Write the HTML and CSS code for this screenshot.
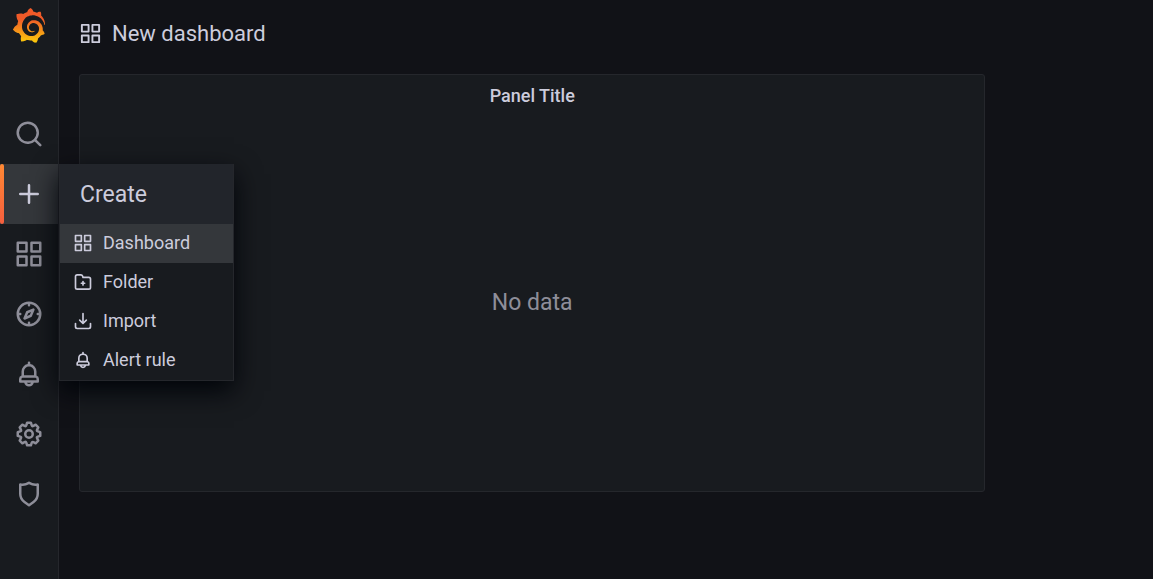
FILE: index.html
```html
<!DOCTYPE html>
<html lang="en">
<head>
<meta charset="utf-8">
<title>New dashboard - Grafana</title>
<link rel="stylesheet" href="styles.css">
</head>
<body>
<svg class="sprite" aria-hidden="true">
  <symbol id="search" viewBox="0 0 24 24"><path d="M21.71,20.29,18,16.61A9,9,0,1,0,16.61,18l3.68,3.68a1,1,0,0,0,1.42,0A1,1,0,0,0,21.71,20.29ZM11,18a7,7,0,1,1,7-7A7,7,0,0,1,11,18Z"/></symbol>
  <symbol id="plus" viewBox="0 0 24 24"><path d="M19,11H13V5a1,1,0,0,0-2,0v6H5a1,1,0,0,0,0,2h6v6a1,1,0,0,0,2,0V13h6a1,1,0,0,0,0-2Z"/></symbol>
  <symbol id="apps" viewBox="0 0 24 24"><path d="M10,13H3a1,1,0,0,0-1,1v7a1,1,0,0,0,1,1h7a1,1,0,0,0,1-1V14A1,1,0,0,0,10,13ZM9,20H4V15H9ZM21,2H14a1,1,0,0,0-1,1v7a1,1,0,0,0,1,1h7a1,1,0,0,0,1-1V3A1,1,0,0,0,21,2ZM20,9H15V4h5Zm1,4H14a1,1,0,0,0-1,1v7a1,1,0,0,0,1,1h7a1,1,0,0,0,1-1V14A1,1,0,0,0,21,13Zm-1,7H15V15h5ZM10,2H3A1,1,0,0,0,2,3v7a1,1,0,0,0,1,1h7a1,1,0,0,0,1-1V3A1,1,0,0,0,10,2ZM9,9H4V4H9Z"/></symbol>
  <symbol id="compass" viewBox="0 0 24 24"><path d="M12,2A10,10,0,1,0,22,12,10,10,0,0,0,12,2Zm1,17.93V19a1,1,0,0,0-2,0v.93A8,8,0,0,1,4.07,13H5a1,1,0,0,0,0-2H4.07A8,8,0,0,1,11,4.07V5a1,1,0,0,0,2,0V4.07A8,8,0,0,1,19.93,11H19a1,1,0,0,0,0,2h.93A8,8,0,0,1,13,19.93ZM15.14,7.55l-5,2.12a1,1,0,0,0-.52.52l-2.12,5a1,1,0,0,0,.21,1.1,1,1,0,0,0,.7.3.93.93,0,0,0,.4-.09l5-2.12a1,1,0,0,0,.52-.52l2.12-5a1,1,0,0,0-1.31-1.31Zm-2.49,5.1-2.28,1,1-2.28,2.28-1Z"/></symbol>
  <symbol id="bell" viewBox="0 0 24 24"><path d="M18,13.18V10a6,6,0,0,0-5-5.91V3a1,1,0,0,0-2,0V4.09A6,6,0,0,0,6,10v3.18A3,3,0,0,0,4,16v2a1,1,0,0,0,1,1H8.14a4,4,0,0,0,7.72,0H19a1,1,0,0,0,1-1V16A3,3,0,0,0,18,13.18ZM8,10a4,4,0,0,1,8,0v3H8Zm4,10a2,2,0,0,1-1.72-1h3.44A2,2,0,0,1,12,20Zm6-3H6V16a1,1,0,0,1,1-1H17a1,1,0,0,1,1,1Z"/></symbol>
  <symbol id="cog" viewBox="0 0 24 24"><path d="M21.32,9.55l-1.89-.63.89-1.78A1,1,0,0,0,20.13,6L18,3.87a1,1,0,0,0-1.15-.19l-1.78.89-.63-1.89A1,1,0,0,0,13.5,2h-3a1,1,0,0,0-.95.68L8.92,4.57,7.14,3.68A1,1,0,0,0,6,3.87L3.87,6a1,1,0,0,0-.19,1.15l.89,1.78-1.89.63A1,1,0,0,0,2,10.5v3a1,1,0,0,0,.68.95l1.89.63-.89,1.78A1,1,0,0,0,3.87,18L6,20.13a1,1,0,0,0,1.15.19l1.78-.89.63,1.89a1,1,0,0,0,.95.68h3a1,1,0,0,0,.95-.68l.63-1.89,1.78.89A1,1,0,0,0,18,20.13L20.13,18a1,1,0,0,0,.19-1.15l-.89-1.78,1.89-.63A1,1,0,0,0,22,13.5v-3A1,1,0,0,0,21.32,9.55ZM20,12.78l-1.2.4A2,2,0,0,0,17.64,16l.57,1.14-1.1,1.1L16,17.64a2,2,0,0,0-2.79,1.16l-.4,1.2H11.22l-.4-1.2A2,2,0,0,0,8,17.64l-1.14.57-1.1-1.1L6.36,16A2,2,0,0,0,5.2,13.18L4,12.78V11.22l1.2-.4A2,2,0,0,0,6.36,8L5.79,6.89l1.1-1.1L8,6.36A2,2,0,0,0,10.82,5.2l.4-1.2h1.56l.4,1.2A2,2,0,0,0,16,6.36l1.14-.57,1.1,1.1L17.64,8a2,2,0,0,0,1.16,2.79l1.2.4ZM12,8a4,4,0,1,0,4,4A4,4,0,0,0,12,8Zm0,6a2,2,0,1,1,2-2A2,2,0,0,1,12,14Z"/></symbol>
  <symbol id="shield" viewBox="0 0 24 24"><path d="M19.63,3.65a1,1,0,0,0-.84-.2,8,8,0,0,1-6.22-1.27,1,1,0,0,0-1.14,0A8,8,0,0,1,5.21,3.45a1,1,0,0,0-.84.2A1,1,0,0,0,4,4.43v7.45a9,9,0,0,0,3.77,7.33l3.65,2.6a1,1,0,0,0,1.16,0l3.65-2.6A9,9,0,0,0,20,11.88V4.43A1,1,0,0,0,19.63,3.65ZM18,11.88a7,7,0,0,1-2.93,5.7L12,19.77,8.93,17.58A7,7,0,0,1,6,11.88V5.58a10,10,0,0,0,6-1.39,10,10,0,0,0,6,1.39Z"/></symbol>
  <symbol id="folder-plus" viewBox="0 0 24 24"><path d="M14,12.5H13v-1a1,1,0,0,0-2,0v1H10a1,1,0,0,0,0,2h1v1a1,1,0,0,0,2,0v-1h1a1,1,0,0,0,0-2Zm5-7H12.72l-.32-1a3,3,0,0,0-2.84-2H5a3,3,0,0,0-3,3v13a3,3,0,0,0,3,3H19a3,3,0,0,0,3-3V8.5A3,3,0,0,0,19,5.5Zm1,13a1,1,0,0,1-1,1H5a1,1,0,0,1-1-1V5.5a1,1,0,0,1,1-1H9.56a1,1,0,0,1,.95.68l.54,1.64A1,1,0,0,0,12,7.5h7a1,1,0,0,1,1,1Z"/></symbol>
  <symbol id="import" viewBox="0 0 24 24"><path d="M21,14a1,1,0,0,0-1,1v4a1,1,0,0,1-1,1H5a1,1,0,0,1-1-1V15a1,1,0,0,0-2,0v4a3,3,0,0,0,3,3H19a3,3,0,0,0,3-3V15A1,1,0,0,0,21,14Zm-9.71,1.71a1,1,0,0,0,.33.21.94.94,0,0,0,.76,0,1,1,0,0,0,.33-.21l4-4a1,1,0,0,0-1.42-1.42L13,12.59V3a1,1,0,0,0-2,0v9.59l-2.29-2.3a1,1,0,1,0-1.42,1.42Z"/></symbol>
</svg>
<div class="app">
  <nav class="sidebar" aria-label="Main">
    <a class="logo" href="#" aria-label="Home">
      <svg class="logo-mark" viewBox="0 0 351 365" aria-hidden="true">
        <defs><linearGradient id="flame" gradientUnits="userSpaceOnUse" x1="175.5" y1="445" x2="175.5" y2="114"><stop offset="0" stop-color="#fff100"/><stop offset="1" stop-color="#f05a28"/></linearGradient></defs>
        <path fill="url(#flame)" d="M342,161.2c-0.6-6.1-1.6-13.1-3.6-20.9c-2-7.7-5-16.2-9.4-25c-4.4-8.8-10.1-17.9-17.5-26.8c-2.9-3.5-6.1-6.9-9.5-10.2c5.1-20.3-6.2-37.9-6.2-37.9c-19.5-1.2-31.9,6.1-36.5,9.4c-0.8-0.3-1.5-0.7-2.3-1c-3.3-1.3-6.7-2.6-10.3-3.7c-3.5-1.1-7.1-2.1-10.8-3c-3.7-0.9-7.4-1.6-11.2-2.2c-0.7-0.1-1.3-0.2-2-0.3c-8.5-27.2-32.9-38.6-32.9-38.6c-27.3,17.3-32.4,41.5-32.4,41.5s-0.1,0.5-0.3,1.4c-1.5,0.4-3,0.9-4.5,1.3c-2.1,0.6-4.2,1.4-6.2,2.2c-2.1,0.8-4.1,1.6-6.2,2.5c-4.1,1.8-8.2,3.8-12.2,6c-3.9,2.2-7.7,4.6-11.4,7.1c-0.5-0.2-1-0.4-1-0.4c-37.8-14.4-71.3,2.9-71.3,2.9c-3.1,40.2,15.1,65.5,18.7,70.1c-0.9,2.5-1.7,5-2.5,7.5c-2.8,9.1-4.9,18.4-6.2,28.1c-0.2,1.4-0.4,2.8-0.5,4.2C18.8,192.7,8.5,228,8.5,228c29.1,33.5,63.1,35.6,63.1,35.6c0,0,0.1-0.1,0.1-0.1c4.3,7.7,9.3,15,14.9,21.9c2.4,2.9,4.8,5.6,7.4,8.3c-10.6,30.4,1.5,55.6,1.5,55.6c32.4,1.2,53.7-14.2,58.2-17.7c3.2,1.1,6.5,2.1,9.8,2.9c10,2.6,20.2,4.1,30.4,4.5c2.5,0.1,5.1,0.2,7.6,0.1l1.2,0l0.8,0l1.6,0l1.6-0.1l0,0.1c15.3,21.8,42.1,24.9,42.1,24.9c19.1-20.1,20.2-40.1,20.2-44.4l0,0c0,0,0-0.1,0-0.3c0-0.4,0-0.6,0-0.6l0,0c0-0.3,0-0.6,0-0.9c4-2.8,7.8-5.8,11.4-9.1c7.6-6.9,14.3-14.8,19.9-23.3c0.5-0.8,1-1.6,1.5-2.4c21.6,1.2,36.9-13.4,36.9-13.4c-3.6-22.5-16.4-33.5-19.1-35.6l0,0c0,0-0.1-0.1-0.3-0.2c-0.2-0.1-0.2-0.2-0.2-0.2c0,0,0,0,0,0c-0.1-0.1-0.3-0.2-0.5-0.3c0.1-1.4,0.2-2.7,0.3-4.1c0.2-2.4,0.2-4.9,0.2-7.3l0-1.8l0-0.9l0-0.5c0-0.6,0-0.4,0-0.6l-0.1-1.5l-0.1-2c0-0.7-0.1-1.3-0.2-1.9c-0.1-0.6-0.1-1.3-0.2-1.9l-0.2-1.9l-0.3-1.9c-0.4-2.5-0.8-4.9-1.4-7.4c-2.3-9.7-6.1-18.9-11-27.2c-5-8.3-11.2-15.6-18.3-21.8c-7-6.2-14.9-11.2-23.1-14.9c-8.3-3.7-16.9-6.1-25.5-7.2c-4.3-0.6-8.6-0.8-12.9-0.7l-1.6,0l-0.4,0c-0.1,0-0.6,0-0.5,0l-0.7,0l-1.6,0.1c-0.6,0-1.2,0.1-1.7,0.1c-2.2,0.2-4.4,0.5-6.5,0.9c-8.6,1.6-16.7,4.7-23.8,9c-7.1,4.3-13.3,9.6-18.3,15.6c-5,6-8.9,12.7-11.6,19.6c-2.7,6.9-4.2,14.1-4.6,21c-0.1,1.7-0.1,3.5-0.1,5.2c0,0.4,0,0.9,0,1.3l0.1,1.4c0.1,0.8,0.1,1.7,0.2,2.5c0.3,3.5,1,6.9,1.9,10.1c1.9,6.5,4.9,12.4,8.6,17.4c3.7,5,8.2,9.1,12.9,12.4c4.7,3.2,9.8,5.5,14.8,7c5,1.5,10,2.1,14.7,2.1c0.6,0,1.2,0,1.7,0c0.3,0,0.6,0,0.9,0c0.3,0,0.6,0,0.9-0.1c0.5,0,1-0.1,1.5-0.1c0.1,0,0.3,0,0.4-0.1l0.5-0.1c0.3,0,0.6-0.1,0.9-0.1c0.6-0.1,1.1-0.2,1.7-0.3c0.6-0.1,1.1-0.2,1.6-0.4c1.1-0.2,2.1-0.6,3.1-0.9c2-0.7,4-1.5,5.7-2.4c1.8-0.9,3.4-2,5-3c0.4-0.3,0.9-0.6,1.3-1c1.6-1.3,1.9-3.7,0.6-5.3c-1.1-1.4-3.1-1.8-4.7-0.9c-0.4,0.2-0.8,0.4-1.2,0.6c-1.4,0.7-2.8,1.3-4.3,1.8c-1.5,0.5-3.1,0.9-4.7,1.2c-0.8,0.1-1.6,0.2-2.5,0.3c-0.4,0-0.8,0.1-1.3,0.1c-0.4,0-0.9,0-1.2,0c-0.4,0-0.8,0-1.2,0c-0.5,0-1,0-1.5-0.1c0,0-0.3,0-0.1,0l-0.2,0l-0.3,0c-0.2,0-0.5,0-0.7-0.1c-0.5-0.1-0.9-0.1-1.4-0.2c-3.7-0.5-7.4-1.6-10.9-3.2c-3.6-1.6-7-3.8-10.1-6.6c-3.1-2.8-5.8-6.1-7.9-9.9c-2.1-3.8-3.6-8-4.3-12.4c-0.3-2.2-0.5-4.5-0.4-6.7c0-0.6,0.1-1.2,0.1-1.8c0,0.2,0-0.1,0-0.1l0-0.2l0-0.5c0-0.3,0.1-0.6,0.1-0.9c0.1-1.2,0.3-2.4,0.5-3.6c1.7-9.6,6.5-19,13.9-26.1c1.9-1.8,3.9-3.4,6-4.9c2.1-1.5,4.4-2.8,6.8-3.9c2.4-1.1,4.8-2,7.4-2.7c2.5-0.7,5.1-1.1,7.8-1.4c1.3-0.1,2.6-0.2,4-0.2c0.4,0,0.6,0,0.9,0l1.1,0l0.7,0c0.3,0,0,0,0.1,0l0.3,0l1.1,0.1c2.9,0.2,5.7,0.6,8.5,1.3c5.6,1.2,11.1,3.3,16.2,6.1c10.2,5.7,18.9,14.5,24.2,25.1c2.7,5.3,4.6,11,5.5,16.9c0.2,1.5,0.4,3,0.5,4.5l0.1,1.1l0.1,1.1c0,0.4,0,0.8,0,1.1c0,0.4,0,0.8,0,1.1l0,1l0,1.1c0,0.7-0.1,1.9-0.1,2.6c-0.1,1.6-0.3,3.3-0.5,4.9c-0.2,1.6-0.5,3.2-0.8,4.8c-0.3,1.6-0.7,3.2-1.1,4.7c-0.8,3.1-1.8,6.2-3,9.3c-2.4,6-5.6,11.8-9.4,17.1c-7.7,10.6-18.2,19.2-30.2,24.7c-6,2.7-12.3,4.7-18.8,5.7c-3.2,0.6-6.5,0.9-9.8,1l-0.6,0l-0.5,0l-1.1,0l-1.6,0l-0.8,0c0.4,0-0.1,0-0.1,0l-0.3,0c-1.8,0-3.5-0.1-5.3-0.3c-7-0.5-13.9-1.8-20.7-3.7c-6.7-1.9-13.2-4.6-19.4-7.8c-12.3-6.6-23.4-15.6-32-26.5c-4.3-5.4-8.1-11.3-11.2-17.4c-3.1-6.1-5.6-12.6-7.4-19.1c-1.8-6.6-2.9-13.3-3.4-20.1l-0.1-1.3l0-0.3l0-0.3l0-0.6l0-1.1l0-0.3l0-0.4l0-0.8l0-1.6l0-0.3c0,0,0,0.1,0-0.1l0-0.6c0-0.8,0-1.7,0-2.5c0.1-3.3,0.4-6.8,0.8-10.2c0.4-3.4,1-6.9,1.7-10.3c0.7-3.4,1.5-6.8,2.5-10.2c1.9-6.7,4.3-13.2,7.1-19.3c5.7-12.2,13.1-23.1,22-31.8c2.2-2.2,4.5-4.2,6.9-6.2c2.4-1.9,4.9-3.7,7.5-5.4c2.5-1.7,5.2-3.2,7.9-4.6c1.3-0.7,2.7-1.4,4.1-2c0.7-0.3,1.4-0.6,2.1-0.9c0.7-0.3,1.4-0.6,2.1-0.9c2.8-1.2,5.7-2.2,8.7-3.1c0.7-0.2,1.5-0.4,2.2-0.7c0.7-0.2,1.5-0.4,2.2-0.6c1.5-0.4,3-0.8,4.5-1.1c0.7-0.2,1.5-0.3,2.3-0.5c0.8-0.2,1.5-0.3,2.3-0.5c0.8-0.1,1.5-0.3,2.3-0.4l1.1-0.2l1.2-0.2c0.8-0.1,1.5-0.2,2.3-0.3c0.9-0.1,1.7-0.2,2.6-0.3c0.7-0.1,1.9-0.2,2.6-0.3c0.5-0.1,1.1-0.1,1.6-0.2l1.1-0.1l0.5-0.1l0.6,0c0.9-0.1,1.7-0.1,2.6-0.2l1.3-0.1c0,0,0.5,0,0.1,0l0.3,0l0.6,0c0.7,0,1.5-0.1,2.2-0.1c2.9-0.1,5.9-0.1,8.8,0c5.8,0.2,11.5,0.9,17,1.9c11.1,2.1,21.5,5.6,31,10.3c9.5,4.6,17.9,10.3,25.3,16.5c0.5,0.4,0.9,0.8,1.4,1.2c0.4,0.4,0.9,0.8,1.3,1.2c0.9,0.8,1.7,1.6,2.6,2.4c0.9,0.8,1.7,1.6,2.5,2.4c0.8,0.8,1.6,1.6,2.4,2.5c3.1,3.3,6,6.6,8.6,10c5.2,6.7,9.4,13.5,12.7,19.9c0.2,0.4,0.4,0.8,0.6,1.2c0.2,0.4,0.4,0.8,0.6,1.2c0.4,0.8,0.8,1.6,1.1,2.4c0.4,0.8,0.7,1.5,1.1,2.3c0.3,0.8,0.7,1.5,1,2.3c1.2,3,2.4,5.9,3.3,8.6c1.5,4.4,2.6,8.3,3.5,11.7c0.3,1.4,1.6,2.3,3,2.1c1.5-0.1,2.6-1.3,2.6-2.8C342.6,170.4,342.5,166.1,342,161.2z"/>
      </svg>
    </a>
    <ul class="nav-list">
      <li class="nav-item"><a class="nav-link" href="#" aria-label="Search"><svg class="icon-nav"><use href="#search"/></svg></a></li>
      <li class="nav-item nav-item-active">
        <a class="nav-link" href="#" aria-label="Create"><svg class="icon-nav"><use href="#plus"/></svg></a>
        <div class="flyout">
          <a class="flyout-title" href="#">Create</a>
          <ul class="flyout-list">
            <li><a class="flyout-link flyout-link-hover" href="#"><svg class="icon-menu"><use href="#apps"/></svg>Dashboard</a></li>
            <li><a class="flyout-link" href="#"><svg class="icon-menu"><use href="#folder-plus"/></svg>Folder</a></li>
            <li><a class="flyout-link" href="#"><svg class="icon-menu"><use href="#import"/></svg>Import</a></li>
            <li><a class="flyout-link" href="#"><svg class="icon-menu"><use href="#bell"/></svg>Alert rule</a></li>
          </ul>
        </div>
      </li>
      <li class="nav-item"><a class="nav-link" href="#" aria-label="Dashboards"><svg class="icon-nav"><use href="#apps"/></svg></a></li>
      <li class="nav-item"><a class="nav-link" href="#" aria-label="Explore"><svg class="icon-nav"><use href="#compass"/></svg></a></li>
      <li class="nav-item"><a class="nav-link" href="#" aria-label="Alerting"><svg class="icon-nav"><use href="#bell"/></svg></a></li>
      <li class="nav-item"><a class="nav-link" href="#" aria-label="Configuration"><svg class="icon-nav"><use href="#cog"/></svg></a></li>
      <li class="nav-item"><a class="nav-link" href="#" aria-label="Server Admin"><svg class="icon-nav"><use href="#shield"/></svg></a></li>
    </ul>
  </nav>
  <main class="main">
    <header class="toolbar">
      <svg class="icon-title" aria-hidden="true"><use href="#apps"/></svg>
      <h1 class="page-title">New dashboard</h1>
    </header>
    <section class="panel">
      <h2 class="panel-title">Panel Title</h2>
      <div class="panel-body">No data</div>
    </section>
  </main>
</div>
</body>
</html>
```

FILE: styles.css
```css
* { box-sizing: border-box; }

body {
  margin: 0;
  background: #111217;
  color: #ccccdc;
  font: 18px/24px Roboto, "Liberation Sans", sans-serif;
}

a { color: inherit; text-decoration: none; }
ul { margin: 0; padding: 0; list-style: none; }
svg { display: block; fill: currentColor; flex: none; }

.sprite { display: none; }

.app { display: flex; min-height: 100vh; }

.sidebar {
  flex: none;
  width: 59px;
  background: #181b1f;
  border-right: 1px solid #25272c;
}

.logo {
  display: flex;
  justify-content: center;
  height: 104px;
  padding-top: 8px;
}

.logo-mark { width: 34px; height: 35px; }

.nav-item { position: relative; }

.nav-link {
  display: flex;
  align-items: center;
  justify-content: center;
  height: 60px;
  color: #8e8e99;
}

.nav-item-active .nav-link { background: #34373b; color: #ccccdc; }

/* orange marker on the edge of the open item */
.nav-item-active::before {
  content: "";
  position: absolute;
  z-index: 2;
  inset: 0 auto 0 0;
  width: 4px;
  border-radius: 2px;
  background: linear-gradient(#ff8833, #f55f3e);
}

.icon-nav { width: 30px; height: 30px; }
.icon-title { width: 23px; height: 23px; }
.icon-menu { width: 20px; height: 20px; }

.flyout {
  position: absolute;
  z-index: 1;
  top: 0;
  left: 59px;
  width: 175px;
  border: 1px solid #25272c;
  border-top: 0;
  background: #181b1f;
  box-shadow: 0 10px 25px #010409;
}

.flyout-title {
  display: block;
  padding: 2px 20px 0;
  background: #22252b;
  font-size: 23px;
  line-height: 58px;
}

.flyout-link {
  display: flex;
  align-items: center;
  gap: 10px;
  height: 39px;
  padding: 0 13px 2px;
}

.flyout-link-hover { background: #34373b; }

.main { flex: 1; min-width: 0; padding: 0 20px 20px; }

.toolbar {
  display: flex;
  align-items: center;
  gap: 10px;
  height: 74px;
  padding-bottom: 7px;
}

.page-title { margin: 0; font-size: 22px; line-height: 28px; font-weight: 400; }

.panel {
  display: flex;
  flex-direction: column;
  width: 86%;
  min-height: 418px;
  border: 1px solid #25272c;
  border-radius: 3px;
  background: #181b1f;
}

.panel-title {
  margin: 0;
  font-size: 18px;
  font-weight: 500;
  line-height: 42px;
  text-align: center;
}

.panel-body {
  display: flex;
  flex: 1;
  align-items: center;
  justify-content: center;
  padding-bottom: 2px;
  color: #8e8e99;
  font-size: 23px;
}
```
